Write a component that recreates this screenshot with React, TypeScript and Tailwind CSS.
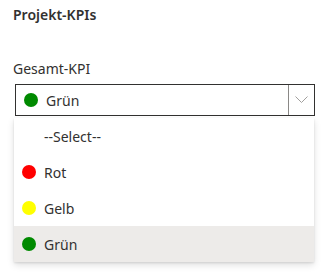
import React from "react";

const Dot = ({ color }: { color: string }) => (
  <span className="inline-block w-[14px] h-[14px] rounded-full shrink-0" style={{ backgroundColor: color }} />
);

export default function App() {
  const items = [
    { label: "--Select--", color: null as string | null },
    { label: "Rot", color: "#ff0000" },
    { label: "Gelb", color: "#ffff00" },
    { label: "Grün", color: "#008a00" },
  ];
  return (
    <div className="w-[336px] h-[277px] bg-white text-[#323130] text-[14px]" style={{ fontFamily: '"Noto Sans", "Open Sans", sans-serif' }}>
      <div className="pl-[13px] pt-[5px]">
        <div className="font-semibold leading-[20px] h-[20px]">Projekt-KPIs</div>
        <div className="mt-[34px] leading-[20px] h-[20px]">Gesamt-KPI</div>
        <div className="relative mt-[5px] ml-[2px] w-[300px]">
          <div className="flex h-[32px] border border-[#323130] bg-white">
            <div className="flex-1 flex items-center pl-[8px] gap-[8px]">
              <Dot color="#008a00" />
              <span>Grün</span>
            </div>
            <div className="w-[26px] border-l border-[#8a8886] flex items-center justify-center">
              <svg width="13" height="8" viewBox="0 0 13 8" fill="none">
                <path d="M0.5 0.5 L6.5 6.5 L12.5 0.5" stroke="#a19f9d" strokeWidth="1" />
              </svg>
            </div>
          </div>
          <div className="absolute left-[-1px] top-[34px] w-[300px] bg-white shadow-[0_3px_7px_rgba(0,0,0,0.13),0_1px_2px_rgba(0,0,0,0.1)]">
            {items.map((it, i) => (
              <div
                key={i}
                className={`flex items-center h-[36px] pl-[8px] gap-[8px] ${i === 3 ? "bg-[#edebe9]" : ""}`}
              >
                {it.color ? <Dot color={it.color} /> : <span className="w-[14px] shrink-0" />}
                <span>{it.label}</span>
              </div>
            ))}
          </div>
        </div>
      </div>
    </div>
  );
}
